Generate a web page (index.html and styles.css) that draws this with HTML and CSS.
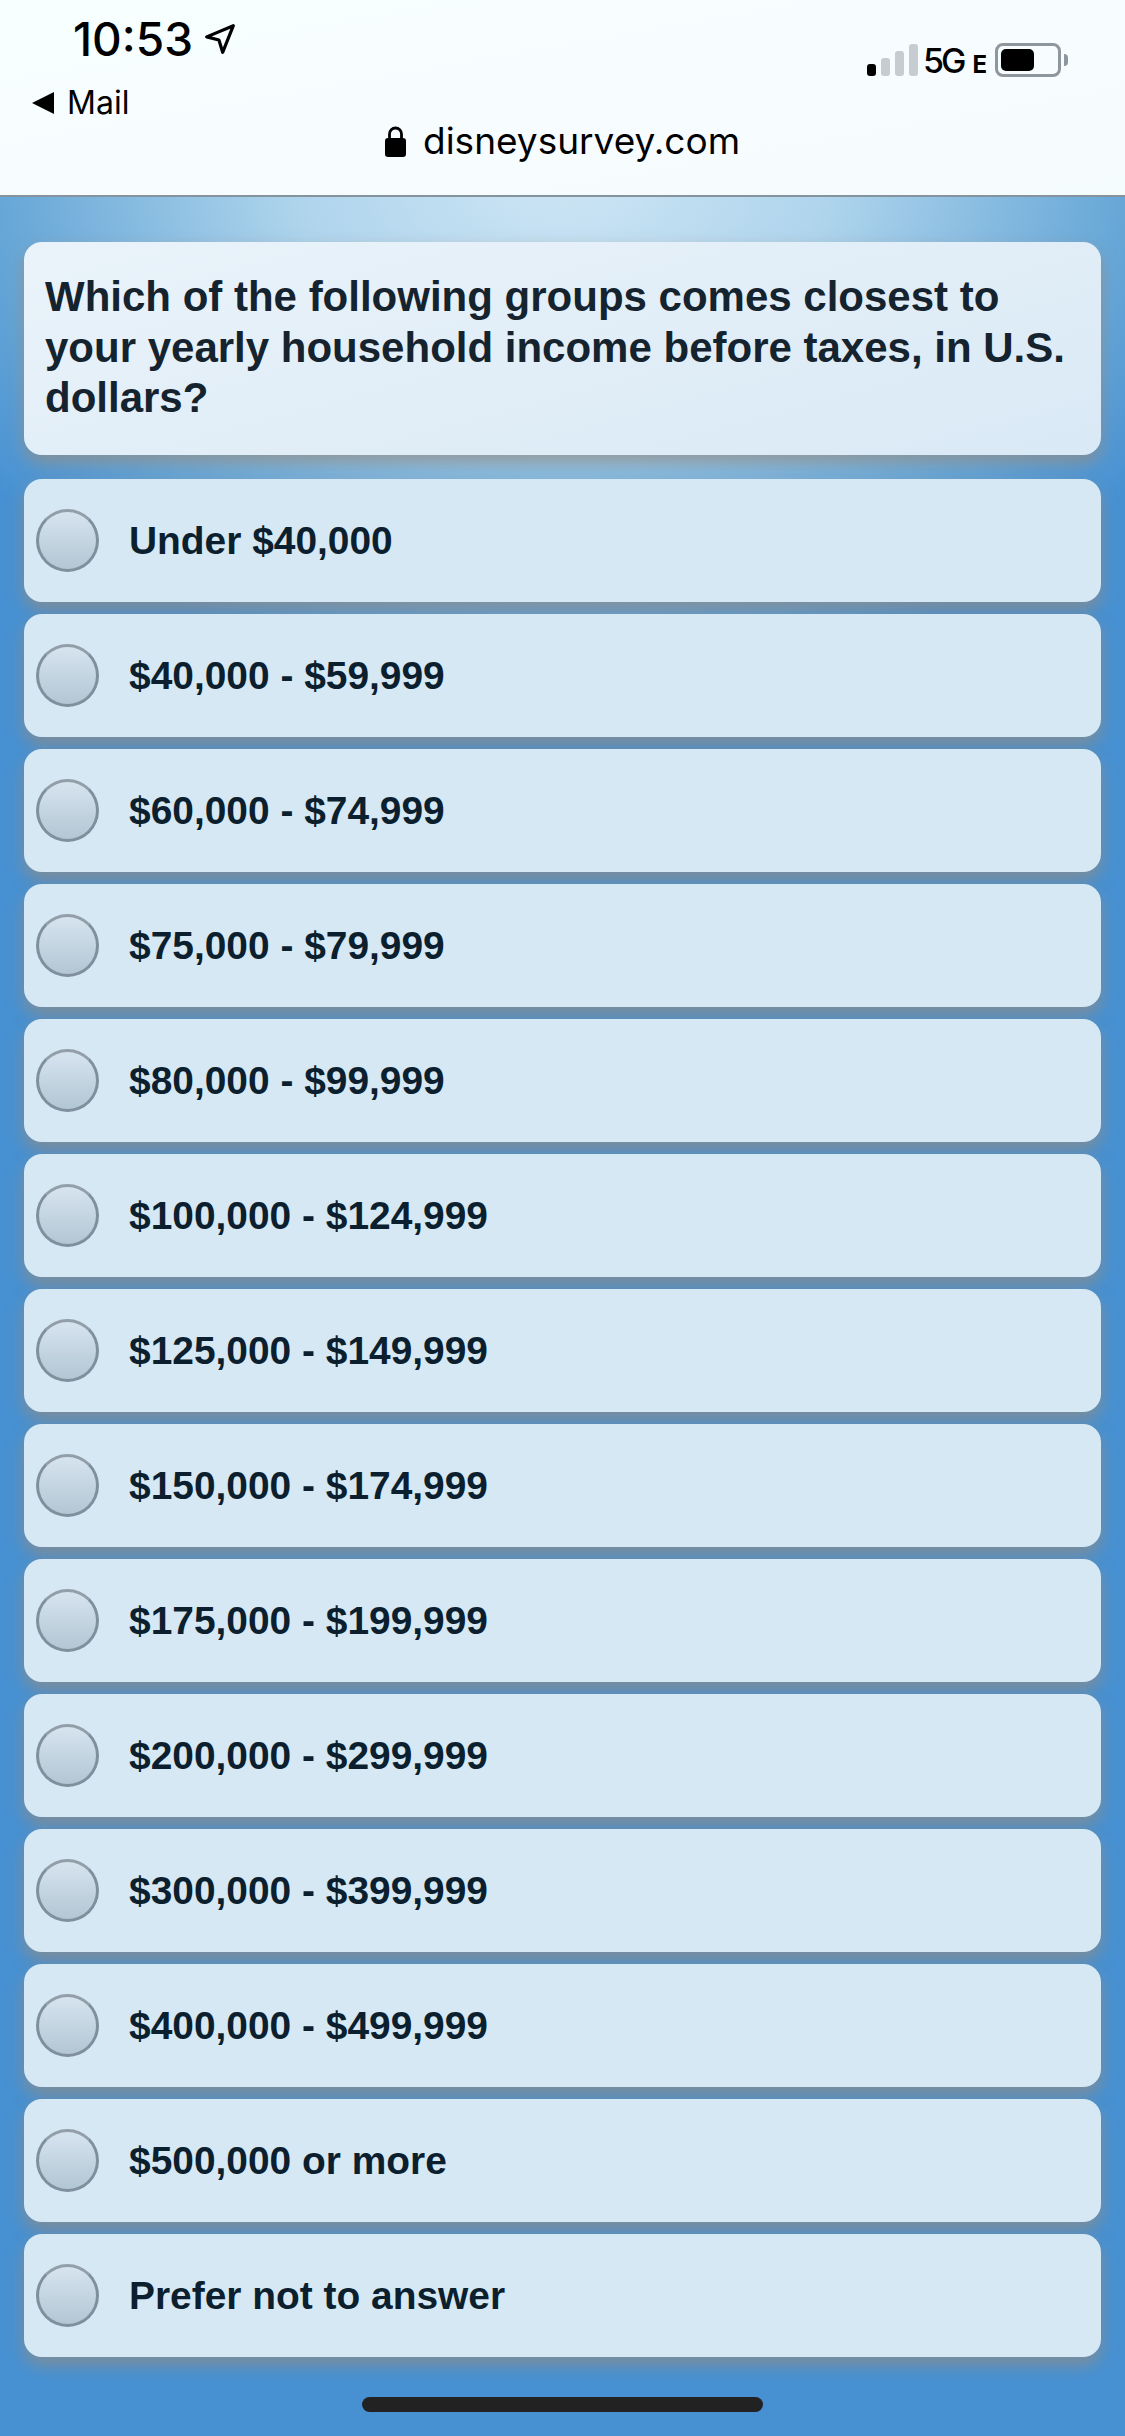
FILE: index.html
```html
<!DOCTYPE html>
<html lang="en">
<head>
  <meta charset="UTF-8" />
  <title>Disney Survey</title>
  <link rel="stylesheet" href="styles.css">
</head>
<body>
  <header class="browser-bar">
    <div class="status-left">
      <div class="clock">
        <span>10:53</span>
        <svg class="arrow" width="32" height="32" viewBox="0 0 30 30"><path d="M27.5 2.5 L2.5 13 L14 16 L17.5 27.5 Z" fill="none" stroke="#000" stroke-width="3" stroke-linejoin="round"/></svg>
      </div>
      <div class="back">
        <span class="back-arrow"></span>
        <span>Mail</span>
      </div>
    </div>
    <div class="url">
      <svg class="lock" width="21" height="31" viewBox="0 0 21 31"><path d="M4.5 14 V8 a6 6 0 0 1 12 0 V14" fill="none" stroke="#000" stroke-width="2.8"/><rect x="0" y="12" width="21" height="19" rx="3" fill="#000"/></svg>
      <span>disneysurvey.com</span>
    </div>
    <div class="status-right">
      <div class="signal">
        <i class="on"></i><i class="b2"></i><i class="b3"></i><i class="b4"></i>
      </div>
      <span class="net">5G</span>
      <span class="net-e">E</span>
      <div class="battery"><div class="battery-fill"></div></div>
      <span class="battery-cap"></span>
    </div>
  </header>

  <main class="survey">
    <h1 class="question">Which of the following groups comes closest to your yearly household income before taxes, in U.S. dollars?</h1>
    <ul class="options">
      <li class="option"><span class="radio"></span>Under $40,000</li>
      <li class="option"><span class="radio"></span>$40,000 - $59,999</li>
      <li class="option"><span class="radio"></span>$60,000 - $74,999</li>
      <li class="option"><span class="radio"></span>$75,000 - $79,999</li>
      <li class="option"><span class="radio"></span>$80,000 - $99,999</li>
      <li class="option"><span class="radio"></span>$100,000 - $124,999</li>
      <li class="option"><span class="radio"></span>$125,000 - $149,999</li>
      <li class="option"><span class="radio"></span>$150,000 - $174,999</li>
      <li class="option"><span class="radio"></span>$175,000 - $199,999</li>
      <li class="option"><span class="radio"></span>$200,000 - $299,999</li>
      <li class="option"><span class="radio"></span>$300,000 - $399,999</li>
      <li class="option"><span class="radio"></span>$400,000 - $499,999</li>
      <li class="option"><span class="radio"></span>$500,000 or more</li>
      <li class="option"><span class="radio"></span>Prefer not to answer</li>
    </ul>
    <div class="home-bar"></div>
  </main>
</body>
</html>
```

FILE: styles.css
```css
html, body {
  margin: 0;
  padding: 0;
}

body {
  width: 1125px;
  height: 2436px;
  overflow: hidden;
  font-family: "Liberation Sans", Arial, sans-serif;
  background: #4791d2;
}

/* top bar */
.browser-bar {
  height: 195px;
  border-bottom: 2px solid #84939d;
  background: linear-gradient(170deg, #f7ffff 0%, #f7fcfe 65%, #f5fcfe 100%);
  display: flex;
  font-family: Inter, "Noto Sans", sans-serif;
  color: #000;
}

.status-left {
  width: 330px;
  flex: none;
  box-sizing: border-box;
  padding: 14px 0 0 32px;
}

.clock {
  display: flex;
  align-items: center;
  gap: 11px;
  padding-left: 41px;
  font-size: 46px;
  font-weight: 500;
  line-height: 50px;
}

.back {
  display: flex;
  align-items: center;
  gap: 13px;
  margin-top: 19px;
  font-size: 32px;
  line-height: 40px;
}

.back-arrow {
  width: 0;
  height: 0;
  border-top: 11px solid transparent;
  border-bottom: 11px solid transparent;
  border-right: 22px solid #000;
}

.url {
  display: flex;
  align-items: center;
  align-self: flex-start;
  gap: 17px;
  margin: 116px 0 0 55px;
  font-size: 37px;
  line-height: 50px;
  flex: none;
}

.lock {
  flex: none;
}

.status-right {
  display: flex;
  align-items: flex-end;
  align-self: flex-start;
  margin: 43px 57px 0 auto;
  height: 34px;
}

.signal {
  display: flex;
  align-items: flex-end;
  gap: 5px;
  margin-bottom: 1px;
}

.signal i {
  display: block;
  width: 9px;
  background: #c7ccd1;
  border-radius: 3px;
}

.signal .on { height: 12px; background: #000; }
.signal .b2 { height: 18px; }
.signal .b3 { height: 25px; }
.signal .b4 { height: 32px; }

.net {
  font-size: 34px;
  font-weight: 500;
  letter-spacing: -3px;
  line-height: 32px;
  margin-left: 5px;
}

.net-e {
  font-size: 24px;
  font-weight: 700;
  line-height: 25px;
  margin-left: 9px;
}

.battery {
  box-sizing: border-box;
  width: 66px;
  height: 34px;
  margin-left: 8px;
  padding: 3px;
  border: 3px solid #8e979e;
  border-radius: 8px;
}

.battery-fill {
  width: 33px;
  height: 100%;
  background: #000;
  border-radius: 5px;
}

.battery-cap {
  align-self: center;
  width: 4px;
  height: 12px;
  margin-left: 3px;
  background: #8e979e;
  border-radius: 0 6px 6px 0;
}

/* survey */
.survey {
  height: 2239px;
  box-sizing: border-box;
  padding: 45px 24px 0;
  background:
    radial-gradient(ellipse 720px 520px at 50% -30px, #cfe6f5 0%, #aed4ec 38%, #6aa9d8 76%, rgba(71, 145, 210, 0) 100%),
    #4791d2;
}

.question {
  margin: 0;
  height: 213px;
  box-sizing: border-box;
  padding: 30px 30px 0 21px;
  font-size: 42px;
  line-height: 50.5px;
  font-weight: 700;
  color: #15232e;
  background: linear-gradient(165deg, #eaf3fa 0%, #d9e9f5 100%);
  border-radius: 18px;
  box-shadow: 0 8px 16px rgba(150, 140, 130, 0.7);
}

.options {
  list-style: none;
  margin: 24px 0 0;
  padding: 0;
  display: flex;
  flex-direction: column;
  gap: 12px;
}

.option {
  height: 123px;
  display: flex;
  align-items: center;
  gap: 30px;
  padding-left: 12px;
  font-size: 38.9px;
  font-weight: 700;
  color: #0c1f2e;
  background: #d7e8f5;
  border-radius: 18px;
  box-shadow: 0 8px 16px rgba(150, 140, 130, 0.7);
}

.radio {
  flex: none;
  box-sizing: border-box;
  width: 63px;
  height: 63px;
  border-radius: 50%;
  border: 3px solid #7f8f9c;
  border-top-color: #929fa9;
  background: linear-gradient(180deg, #d6e4ef 0%, #b3c6d4 100%);
}

.home-bar {
  width: 401px;
  height: 15px;
  margin: 40px auto 0;
  background: #222;
  border-radius: 8px;
}
```
